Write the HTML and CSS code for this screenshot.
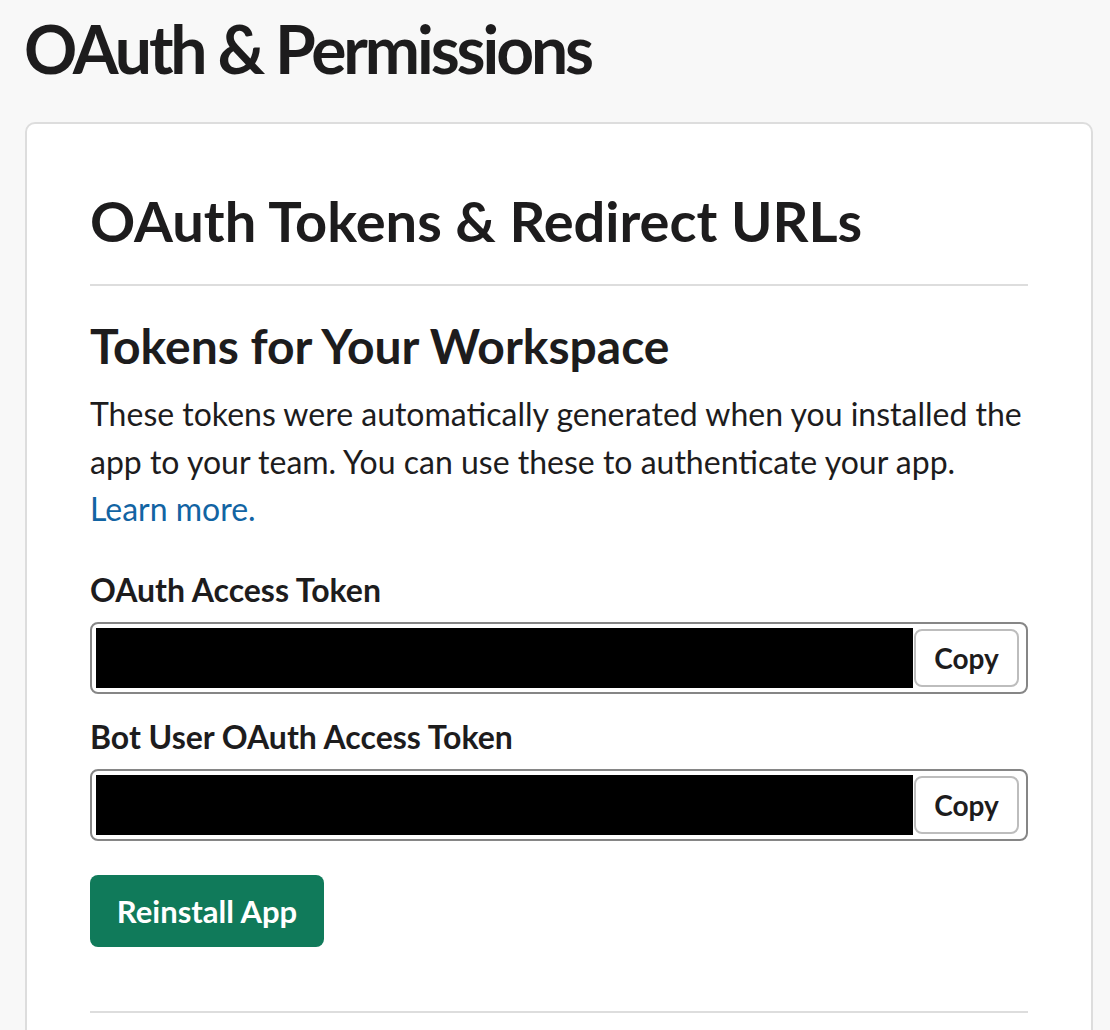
FILE: index.html
```html
<!DOCTYPE html>
<html lang="en">
<head>
<meta charset="utf-8">
<title>OAuth &amp; Permissions</title>
<link rel="stylesheet" href="styles.css">
</head>
<body>
<div class="page">
  <h1 class="page-title">OAuth &amp; Permissions</h1>
  <section class="card">
    <h2 class="card-title">OAuth Tokens &amp; Redirect URLs</h2>
    <hr class="divider">
    <h3 class="section-title">Tokens for Your Workspace</h3>
    <p class="desc">These tokens were automatically generated when you installed the app to your team. You can use these to authenticate your app. <a class="link" href="#">Learn more.</a></p>

    <div class="field">
      <label class="field-label">OAuth Access Token</label>
      <div class="token-input">
        <div class="token-value"></div>
        <button class="copy-btn" type="button">Copy</button>
      </div>
    </div>

    <div class="field field-second">
      <label class="field-label">Bot User OAuth Access Token</label>
      <div class="token-input">
        <div class="token-value"></div>
        <button class="copy-btn" type="button">Copy</button>
      </div>
    </div>

    <button class="primary-btn" type="button">Reinstall App</button>
    <hr class="divider divider-bottom">
  </section>
</div>
</body>
</html>
```

FILE: styles.css
```css
html, body {
  margin: 0;
  padding: 0;
  background: #f8f8f8;
}

body {
  font-family: Lato, "Open Sans", "Liberation Sans", sans-serif;
  color: #1d1c1d;
  height: 1030px;
  overflow: hidden;
}

.page {
  padding: 9px 17px 0 25px;
}

.page-title {
  margin: 0 0 0 -1px;
  font-size: 66px;
  line-height: 80px;
  font-weight: 700;
  letter-spacing: -3.1px;
}

.card {
  margin-top: 33px;
  background: #fff;
  border: 2px solid #dddddd;
  border-radius: 10px;
  padding: 63px 63px 200px 63px;
}

.card-title {
  margin: 0;
  font-size: 56px;
  line-height: 68px;
  font-weight: 700;
}

.divider {
  border: 0;
  height: 2px;
  background: #dddddd;
  margin: 29px 0 0 0;
}

.section-title {
  margin: 31px 0 0 0;
  font-size: 48px;
  line-height: 58px;
  font-weight: 700;
}

.desc {
  margin: 15px 0 0 0;
  font-size: 32px;
  line-height: 47.5px;
  font-weight: 400;
}

.link {
  color: #1264a3;
  text-decoration: none;
}

.field {
  margin-top: 37px;
  display: flex;
  flex-direction: column;
}

.field-second {
  margin-top: 23px;
}

.field-label {
  font-size: 32px;
  line-height: 40px;
  font-weight: 700;
  margin-bottom: 12px;
}

.token-input {
  display: flex;
  align-items: center;
  height: 72px;
  box-sizing: border-box;
  border: 2px solid #868686;
  border-radius: 8px;
  padding: 4px;
  background: #fff;
}

.token-value {
  flex: 1;
  height: 60px;
  background: #000;
}

.copy-btn {
  margin: 0 3px 0 1px;
  width: 105px;
  height: 58px;
  box-sizing: border-box;
  border: 2px solid #bdbdbd;
  border-radius: 8px;
  background: #fff;
  font-family: inherit;
  font-size: 28px;
  font-weight: 700;
  color: #1d1c1d;
  padding: 0;
}

.primary-btn {
  margin-top: 34px;
  width: 234px;
  height: 72px;
  border: 0;
  border-radius: 8px;
  background: #107a5a;
  color: #fff;
  font-family: inherit;
  font-size: 31px;
  font-weight: 700;
  padding: 0;
  display: block;
}

.divider-bottom {
  margin-top: 64px;
}
```
